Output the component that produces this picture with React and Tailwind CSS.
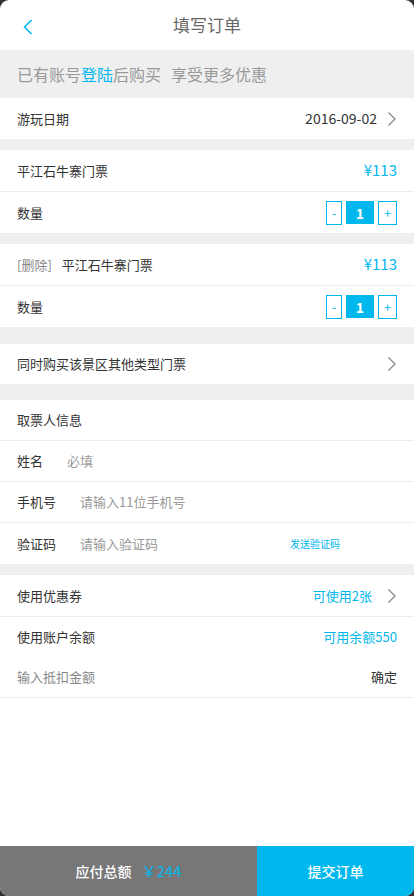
import React from "react";

const font = { fontFamily: '"Noto Sans CJK SC", "Noto Sans", sans-serif' };

function Chevron({ className = "" }) {
  return (
    <svg width="10" height="16" viewBox="0 0 10 16" className={className}>
      <path d="M1.5 1.5 L8 8 L1.5 14.5" fill="none" stroke="#888" strokeWidth="1.3" />
    </svg>
  );
}

function Stepper() {
  return (
    <div className="flex items-center">
      <div className="w-[16px] h-[24px] border border-[#00b7ee] flex items-center justify-center text-[#00b7ee] text-[12px] leading-none">-</div>
      <div className="ml-[4px] w-[28px] h-[23px] bg-[#00b7ee] flex items-center justify-center text-white text-[14px] font-bold leading-none">1</div>
      <div className="ml-[4px] w-[19px] h-[24px] border border-[#00b7ee] flex items-center justify-center text-[#00b7ee] text-[12px] leading-none">+</div>
    </div>
  );
}

function Row({ children, h = "h-[41px]", border = false, className = "" }) {
  return (
    <div className={`${h} shrink-0 px-[17px] flex items-center justify-between bg-white text-[13px] ${border ? "border-b border-[#ececec]" : ""} ${className}`}>
      {children}
    </div>
  );
}

export default function App() {
  return (
    <div className="bg-[#333] w-[414px] h-[896px]" style={font}>
      <div className="w-[414px] h-[896px] rounded-[9px] overflow-hidden bg-white flex flex-col text-[#333]">
        <div className="h-[50px] shrink-0 relative flex items-center justify-center">
          <svg width="10" height="16" viewBox="0 0 10 16" className="absolute left-[23px] top-[19px]">
            <path d="M8.5 1 L1.5 8 L8.5 15" fill="none" stroke="#00b7ee" strokeWidth="1.6" />
          </svg>
          <span className="text-[17px] text-[#666]">填写订单</span>
        </div>
        <div className="h-[48px] shrink-0 bg-[#efefef] px-[17px] flex items-center text-[16px] text-[#999]">
          <span>已有账号<span className="text-[#00b7ee]">登陆</span>后购买</span>
          <span className="ml-[10px]">享受更多优惠</span>
        </div>

        <Row>
          <span>游玩日期</span>
          <div className="flex items-center">
            <span className="text-[14px]">2016-09-02</span>
            <Chevron className="ml-[10px]" />
          </div>
        </Row>
        <div className="h-[11px] shrink-0 bg-[#efefef]" />

        <Row h="h-[42px]" border>
          <span>平江石牛寨门票</span>
          <span className="text-[#00b7ee] text-[15px]">¥113</span>
        </Row>
        <Row>
          <span>数量</span>
          <Stepper />
        </Row>
        <div className="h-[11px] shrink-0 bg-[#efefef]" />

        <Row h="h-[42px]" border>
          <span><span className="text-[#888]">[删除]</span><span className="ml-[10px]">平江石牛寨门票</span></span>
          <span className="text-[#00b7ee] text-[15px]">¥113</span>
        </Row>
        <Row>
          <span>数量</span>
          <Stepper />
        </Row>
        <div className="h-[17px] shrink-0 bg-[#efefef]" />

        <Row h="h-[40px]">
          <span>同时购买该景区其他类型门票</span>
          <Chevron />
        </Row>
        <div className="h-[16px] shrink-0 bg-[#efefef]" />

        <Row border>
          <span>取票人信息</span>
        </Row>
        <Row border className="!justify-start">
          <span>姓名</span>
          <span className="ml-[24px] text-[#999]">必填</span>
        </Row>
        <Row border className="!justify-start">
          <span>手机号</span>
          <span className="ml-[24px] text-[#999]">请输入11位手机号</span>
        </Row>
        <Row className="!justify-start">
          <span>验证码</span>
          <span className="ml-[24px] text-[#999]">请输入验证码</span>
          <span className="ml-[132px] text-[10px] text-[#00b7ee]">发送验证码</span>
        </Row>
        <div className="h-[11px] shrink-0 bg-[#efefef]" />

        <Row h="h-[42px]" border>
          <span>使用优惠券</span>
          <div className="flex items-center">
            <span className="text-[#00b7ee]">可使用2张</span>
            <Chevron className="ml-[15px]" />
          </div>
        </Row>
        <Row h="h-[40px]">
          <span>使用账户余额</span>
          <span className="text-[#00b7ee]">可用余额550</span>
        </Row>
        <Row h="h-[41px]" border>
          <span className="text-[#888]">输入抵扣金额</span>
          <span>确定</span>
        </Row>

        <div className="flex-1" />

        <div className="h-[50px] shrink-0 flex">
          <div className="w-[257px] bg-[#777] flex items-center justify-center">
            <span className="text-white text-[14px] font-medium">应付总额</span>
            <span className="ml-[10px] text-[#00b7ee] text-[15px]">￥244</span>
          </div>
          <div className="flex-1 bg-[#00b8ee] flex items-center justify-center text-white text-[14px] font-medium">
            提交订单
          </div>
        </div>
      </div>
    </div>
  );
}
